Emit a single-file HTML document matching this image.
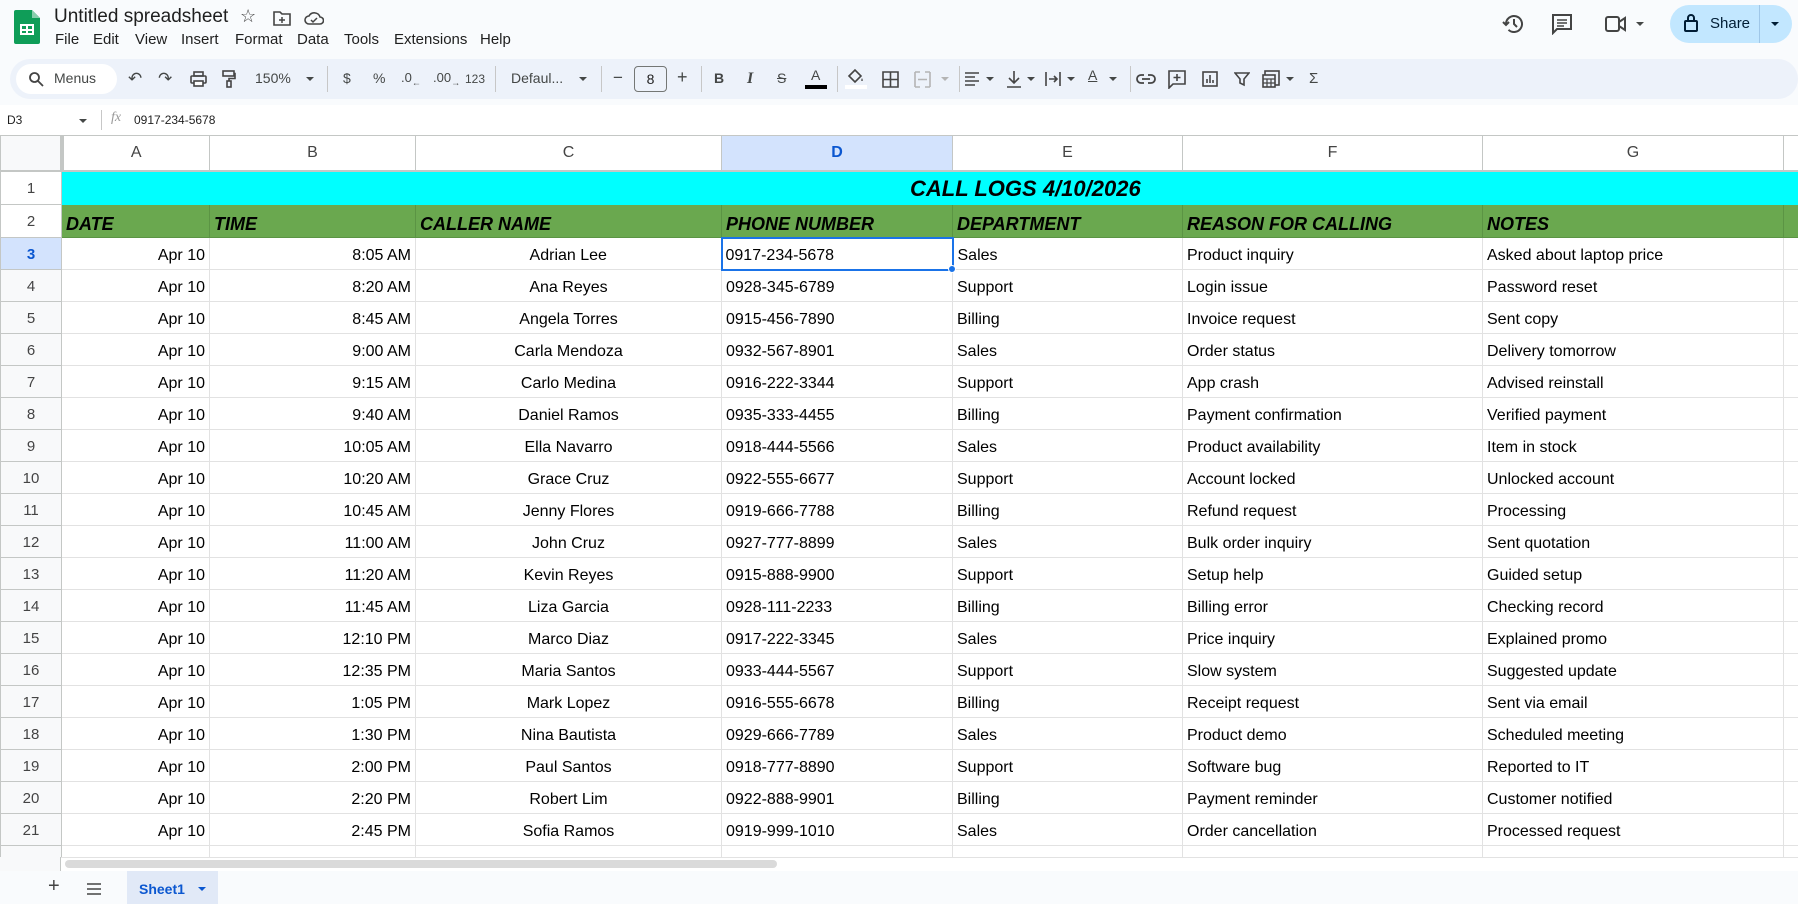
<!DOCTYPE html>
<html><head><meta charset="utf-8"><style>
*{box-sizing:border-box;margin:0;padding:0}
body{width:1798px;height:904px;overflow:hidden;background:#f9fbfd;font-family:"Liberation Sans",Arial,sans-serif;position:relative;color:#1f1f1f}
.a{position:absolute;white-space:nowrap}
.menu{top:31px;font-size:15px;color:#1f1f1f}
.tb{top:70px;font-size:14px;color:#444746}
.sep{position:absolute;top:66px;width:1px;height:26px;background:#c7c7c7}
.car{position:absolute;top:77px;width:0;height:0;border-left:4px solid transparent;border-right:4px solid transparent;border-top:4px solid #444746}
table{position:absolute;left:0;top:135px;width:1823px;border-collapse:collapse;table-layout:fixed;font-size:16px;background:#fff}
td{border:1px solid #e2e2e2;padding:5px 4px 0;overflow:hidden;white-space:nowrap;height:32px;color:#000;vertical-align:middle;line-height:20px}
td.rh{background:#f8f9fa;border-color:#c4c7c5;text-align:center;color:#444;font-size:15px;padding:2px 0 0}
tr.ch td{background:#fff;border-color:#c4c7c5;border-bottom:2px solid #c4c7c5;text-align:center;color:#444;font-size:16px;height:35px;padding:0}
tr.ch td.rh{background:#f8f9fa;border-right:4px solid #c4c7c5}
tr.t td{background:#00ffff;border-color:#00ffff;height:34px}
tr.t td.rh{background:#fff;border-color:#c4c7c5}
tr.g td{background:#6aa84f;border-color:#5b9444;font-weight:bold;font-style:italic;font-size:18px;height:33px;padding-top:6px}
tr.g td.rh{background:#fff;font-weight:normal;font-style:normal;font-size:15px;border-color:#c4c7c5;color:#444;padding-top:2px}
.r{text-align:right}.c{text-align:center}
</style></head><body>
<svg class="a" style="left:14px;top:10px" width="26" height="34" viewBox="0 0 26 34"><path d="M2 0h16l8 8v24a2 2 0 0 1-2 2H2a2 2 0 0 1-2-2V2a2 2 0 0 1 2-2z" fill="#0f9d58"/><path d="M18 0v8h8z" fill="#87ceac"/><rect x="6" y="14" width="14" height="11" fill="#fff"/><path d="M8 16h4v3H8zM14 16h4v3h-4zM8 21h4v2H8zM14 21h4v2h-4z" fill="#0f9d58"/></svg>
<div class="a" style="left:54px;top:6px;font-size:19px;color:#1f1f1f">Untitled spreadsheet</div>
<div class="a" style="left:240px;top:6px;font-size:18px;color:#444">☆</div>
<svg class="a" style="left:273px;top:10px" width="18" height="16" viewBox="0 0 18 16"><path d="M1 2h6l2 2h8v11H1z" fill="none" stroke="#444" stroke-width="1.6"/><path d="M9 7v6M6 10h6" stroke="#444" stroke-width="1.5"/></svg>
<svg class="a" style="left:304px;top:10px" width="20" height="16" viewBox="0 0 20 16"><path d="M5 14a4 4 0 0 1 0-8 6 6 0 0 1 11 1 3.5 3.5 0 0 1 0 7z" fill="none" stroke="#444" stroke-width="1.6"/><path d="M7 10l2 2 4-4" fill="none" stroke="#444" stroke-width="1.5"/></svg>
<div class="a menu" style="left:55px">File</div>
<div class="a menu" style="left:93px">Edit</div>
<div class="a menu" style="left:135px">View</div>
<div class="a menu" style="left:181px">Insert</div>
<div class="a menu" style="left:235px">Format</div>
<div class="a menu" style="left:297px">Data</div>
<div class="a menu" style="left:344px">Tools</div>
<div class="a menu" style="left:394px">Extensions</div>
<div class="a menu" style="left:480px">Help</div>
<svg class="a" style="left:1502px;top:12px" width="24" height="24" viewBox="0 0 24 24"><path d="M4 12a8 8 0 1 1 2.5 5.8" fill="none" stroke="#444" stroke-width="2"/><path d="M1 10l3 3 3-3" fill="none" stroke="#444" stroke-width="2"/><path d="M12 7v5l3 3" fill="none" stroke="#444" stroke-width="2"/></svg>
<svg class="a" style="left:1551px;top:13px" width="22" height="22" viewBox="0 0 22 22"><path d="M2 2h18v14H6l-4 4z" fill="none" stroke="#444" stroke-width="2"/><path d="M6 7h10M6 10h10M6 13h7" stroke="#444" stroke-width="1.6"/></svg>
<svg class="a" style="left:1605px;top:15px" width="22" height="18" viewBox="0 0 22 18"><rect x="1" y="2" width="13" height="14" rx="2" fill="none" stroke="#444" stroke-width="2"/><path d="M14 7l6-4v12l-6-4" fill="none" stroke="#444" stroke-width="2"/></svg>
<div class="car" style="left:1636px;top:22px"></div>
<div class="a" style="left:1670px;top:5px;width:122px;height:38px;border-radius:19px;background:#c2e7ff"></div>
<div class="a" style="left:1759px;top:5px;width:1px;height:38px;background:#9fc7e8"></div>
<svg class="a" style="left:1684px;top:14px" width="14" height="18" viewBox="0 0 14 18"><rect x="1" y="7" width="12" height="10" rx="1" fill="none" stroke="#001d35" stroke-width="2"/><path d="M4 7V4a3 3 0 0 1 6 0v3" fill="none" stroke="#001d35" stroke-width="2"/></svg>
<div class="a" style="left:1710px;top:15px;font-size:15px;color:#001d35">Share</div>
<div class="car" style="left:1771px;top:22px;border-top-color:#001d35"></div>
<div class="a" style="left:10px;top:59px;width:1788px;height:40px;border-radius:20px;background:#edf2fa"></div>
<div class="a" style="left:16px;top:64px;width:101px;height:30px;border-radius:15px;background:#fff"></div>
<svg class="a" style="left:28px;top:71px" width="16" height="16" viewBox="0 0 16 16"><circle cx="6.5" cy="6.5" r="4.5" fill="none" stroke="#444" stroke-width="1.8"/><path d="M10 10l5 5" stroke="#444" stroke-width="1.8"/></svg>
<div class="a tb" style="left:54px">Menus</div>
<div class="a tb" style="left:128px;font-size:17px;top:69px">↶</div>
<div class="a tb" style="left:158px;font-size:17px;top:69px">↷</div>
<svg class="a" style="left:190px;top:71px" width="17" height="16" viewBox="0 0 17 16"><rect x="4" y="1" width="9" height="4" fill="none" stroke="#444" stroke-width="1.6"/><rect x="1" y="5" width="15" height="7" rx="1" fill="none" stroke="#444" stroke-width="1.6"/><rect x="4" y="10" width="9" height="5" fill="#fff" stroke="#444" stroke-width="1.6"/></svg>
<svg class="a" style="left:222px;top:70px" width="14" height="18" viewBox="0 0 14 18"><rect x="1" y="1" width="11" height="5" fill="none" stroke="#444" stroke-width="1.6"/><path d="M12 3.5h1v5H7v3" fill="none" stroke="#444" stroke-width="1.6"/><rect x="5" y="11" width="4" height="6" fill="none" stroke="#444" stroke-width="1.6"/></svg>
<div class="a tb" style="left:255px">150%</div><div class="car" style="left:306px"></div>
<div class="sep" style="left:327px"></div>
<div class="a tb" style="left:343px">$</div>
<div class="a tb" style="left:373px">%</div>
<div class="a tb" style="left:401px;font-size:13px">.0<sub style="font-size:9px">←</sub></div>
<div class="a tb" style="left:433px;font-size:13px">.00<sub style="font-size:9px">→</sub></div>
<div class="a tb" style="left:465px;font-size:12px;top:72px">123</div>
<div class="sep" style="left:495px"></div>
<div class="a tb" style="left:511px">Defaul...</div><div class="car" style="left:579px"></div>
<div class="sep" style="left:601px"></div>
<div class="a tb" style="left:613px;font-size:17px;top:68px">−</div>
<div class="a" style="left:634px;top:66px;width:33px;height:26px;border:1px solid #747775;border-radius:4px;text-align:center;font-size:14px;line-height:24px;color:#1f1f1f">8</div>
<div class="a tb" style="left:677px;font-size:18px;top:67px">+</div>
<div class="sep" style="left:701px"></div>
<div class="a tb" style="left:714px;font-weight:bold">B</div>
<div class="a tb" style="left:747px;font-style:italic;font-weight:bold;font-family:'Liberation Serif',serif;font-size:16px">I</div>
<div class="a tb" style="left:777px;text-decoration:line-through">S</div>
<div class="a tb" style="left:811px;top:67px">A</div>
<div class="a" style="left:805px;top:85px;width:22px;height:4px;background:#000"></div>
<div class="sep" style="left:837px"></div>
<svg class="a" style="left:846px;top:68px" width="18" height="16" viewBox="0 0 18 16"><path d="M3 8l6-6 6 6-6 6z" fill="none" stroke="#444" stroke-width="1.6"/><path d="M16 10c1 2 1 3 0 3s-1-1 0-3z" fill="#444"/></svg>
<div class="a" style="left:845px;top:85px;width:22px;height:4px;background:#fff"></div>
<svg class="a" style="left:882px;top:71px" width="17" height="17" viewBox="0 0 17 17"><path d="M1 1h15v15H1zM8.5 1v15M1 8.5h15" fill="none" stroke="#444" stroke-width="1.6"/></svg>
<svg class="a" style="left:914px;top:71px" width="17" height="17" viewBox="0 0 17 17"><path d="M1 1h5M11 1h5M1 16h5M11 16h5M1 1v15M16 1v15M4 8.5h9" fill="none" stroke="#b4b4b4" stroke-width="1.6"/></svg>
<div class="car" style="left:941px;border-top-color:#b4b4b4"></div>
<div class="sep" style="left:959px"></div>
<svg class="a" style="left:964px;top:71px" width="16" height="16" viewBox="0 0 16 16"><path d="M1 2h14M1 6h10M1 10h14M1 14h10" stroke="#444" stroke-width="1.6"/></svg><div class="car" style="left:986px"></div>
<svg class="a" style="left:1006px;top:70px" width="16" height="18" viewBox="0 0 16 18"><path d="M8 1v11M3 8l5 5 5-5M1 17h14" fill="none" stroke="#444" stroke-width="1.6"/></svg><div class="car" style="left:1027px"></div>
<svg class="a" style="left:1045px;top:71px" width="16" height="16" viewBox="0 0 16 16"><path d="M1 1v14M15 1v14M4 8h8M9 5l3 3-3 3" fill="none" stroke="#444" stroke-width="1.6"/></svg><div class="car" style="left:1067px"></div>
<div class="a tb" style="left:1088px;top:67px;text-decoration:underline">A</div><div class="car" style="left:1109px"></div>
<div class="sep" style="left:1130px"></div>
<svg class="a" style="left:1136px;top:73px" width="20" height="12" viewBox="0 0 20 12"><path d="M8 2H5a4 4 0 0 0 0 8h3M12 2h3a4 4 0 0 1 0 8h-3M6 6h8" fill="none" stroke="#444" stroke-width="1.8"/></svg>
<svg class="a" style="left:1168px;top:70px" width="18" height="19" viewBox="0 0 18 19"><path d="M1 1h16v13H5l-4 4z" fill="none" stroke="#444" stroke-width="1.6"/><path d="M9 4v7M5.5 7.5h7" stroke="#444" stroke-width="1.6"/></svg>
<svg class="a" style="left:1202px;top:71px" width="16" height="16" viewBox="0 0 16 16"><rect x="1" y="1" width="14" height="14" fill="none" stroke="#444" stroke-width="1.6"/><path d="M5 12V8M8 12V4M11 12V9" stroke="#444" stroke-width="1.6"/></svg>
<svg class="a" style="left:1234px;top:71px" width="16" height="16" viewBox="0 0 16 16"><path d="M1 2h14l-5 6v6l-4-2V8z" fill="none" stroke="#444" stroke-width="1.6"/></svg>
<svg class="a" style="left:1262px;top:70px" width="18" height="18" viewBox="0 0 18 18"><rect x="3" y="1" width="14" height="14" fill="none" stroke="#444" stroke-width="1.6"/><rect x="1" y="5" width="12" height="12" fill="#edf2fa" stroke="#444" stroke-width="1.6"/><path d="M1 9h12M5 9v8M9 9v8M1 13h12" stroke="#444" stroke-width="1.2"/></svg><div class="car" style="left:1286px"></div>
<div class="a tb" style="left:1309px;font-size:15px">Σ</div>
<div class="a" style="left:0;top:105px;width:1798px;height:30px;background:#fff"></div>
<div class="a" style="left:7px;top:113px;font-size:12px;color:#1f1f1f">D3</div>
<div class="car" style="left:79px;top:119px"></div>
<div class="a" style="left:101px;top:110px;width:1px;height:20px;background:#c7c7c7"></div>
<div class="a" style="left:111px;top:110px;font-size:14px;font-style:italic;font-family:'Liberation Serif',serif;color:#999">fx</div>
<div class="a" style="left:134px;top:113px;font-size:12px;color:#1f1f1f">0917-234-5678</div>
<table>
<colgroup><col style="width:61px"><col style="width:148px"><col style="width:206px"><col style="width:306px"><col style="width:231px"><col style="width:230px"><col style="width:300px"><col style="width:301px"><col style="width:40px"></colgroup>
<tr class="ch"><td class="rh"></td><td>A</td><td>B</td><td>C</td><td style="background:#d3e3fd;color:#0b57d0;font-weight:bold">D</td><td>E</td><td>F</td><td>G</td><td></td></tr>
<tr class="t"><td class="rh">1</td><td colspan="8" style="position:relative"><span style="position:absolute;left:848px;top:5px;font-weight:bold;font-style:italic;font-size:22px;line-height:24px">CALL LOGS 4/10/2026</span></td></tr>
<tr class="g"><td class="rh">2</td><td>DATE</td><td>TIME</td><td>CALLER NAME</td><td>PHONE NUMBER</td><td>DEPARTMENT</td><td>REASON FOR CALLING</td><td>NOTES</td><td></td></tr>
<tr><td class="rh" style="background:#d3e3fd;color:#0b57d0;font-weight:bold">3</td><td class="r">Apr 10</td><td class="r">8:05 AM</td><td class="c">Adrian Lee</td><td style="border:2px solid #1a73e8;padding-left:3px">0917-234-5678</td><td>Sales</td><td>Product inquiry</td><td>Asked about laptop price</td><td></td></tr>
<tr><td class="rh">4</td><td class="r">Apr 10</td><td class="r">8:20 AM</td><td class="c">Ana Reyes</td><td>0928-345-6789</td><td>Support</td><td>Login issue</td><td>Password reset</td><td></td></tr>
<tr><td class="rh">5</td><td class="r">Apr 10</td><td class="r">8:45 AM</td><td class="c">Angela Torres</td><td>0915-456-7890</td><td>Billing</td><td>Invoice request</td><td>Sent copy</td><td></td></tr>
<tr><td class="rh">6</td><td class="r">Apr 10</td><td class="r">9:00 AM</td><td class="c">Carla Mendoza</td><td>0932-567-8901</td><td>Sales</td><td>Order status</td><td>Delivery tomorrow</td><td></td></tr>
<tr><td class="rh">7</td><td class="r">Apr 10</td><td class="r">9:15 AM</td><td class="c">Carlo Medina</td><td>0916-222-3344</td><td>Support</td><td>App crash</td><td>Advised reinstall</td><td></td></tr>
<tr><td class="rh">8</td><td class="r">Apr 10</td><td class="r">9:40 AM</td><td class="c">Daniel Ramos</td><td>0935-333-4455</td><td>Billing</td><td>Payment confirmation</td><td>Verified payment</td><td></td></tr>
<tr><td class="rh">9</td><td class="r">Apr 10</td><td class="r">10:05 AM</td><td class="c">Ella Navarro</td><td>0918-444-5566</td><td>Sales</td><td>Product availability</td><td>Item in stock</td><td></td></tr>
<tr><td class="rh">10</td><td class="r">Apr 10</td><td class="r">10:20 AM</td><td class="c">Grace Cruz</td><td>0922-555-6677</td><td>Support</td><td>Account locked</td><td>Unlocked account</td><td></td></tr>
<tr><td class="rh">11</td><td class="r">Apr 10</td><td class="r">10:45 AM</td><td class="c">Jenny Flores</td><td>0919-666-7788</td><td>Billing</td><td>Refund request</td><td>Processing</td><td></td></tr>
<tr><td class="rh">12</td><td class="r">Apr 10</td><td class="r">11:00 AM</td><td class="c">John Cruz</td><td>0927-777-8899</td><td>Sales</td><td>Bulk order inquiry</td><td>Sent quotation</td><td></td></tr>
<tr><td class="rh">13</td><td class="r">Apr 10</td><td class="r">11:20 AM</td><td class="c">Kevin Reyes</td><td>0915-888-9900</td><td>Support</td><td>Setup help</td><td>Guided setup</td><td></td></tr>
<tr><td class="rh">14</td><td class="r">Apr 10</td><td class="r">11:45 AM</td><td class="c">Liza Garcia</td><td>0928-111-2233</td><td>Billing</td><td>Billing error</td><td>Checking record</td><td></td></tr>
<tr><td class="rh">15</td><td class="r">Apr 10</td><td class="r">12:10 PM</td><td class="c">Marco Diaz</td><td>0917-222-3345</td><td>Sales</td><td>Price inquiry</td><td>Explained promo</td><td></td></tr>
<tr><td class="rh">16</td><td class="r">Apr 10</td><td class="r">12:35 PM</td><td class="c">Maria Santos</td><td>0933-444-5567</td><td>Support</td><td>Slow system</td><td>Suggested update</td><td></td></tr>
<tr><td class="rh">17</td><td class="r">Apr 10</td><td class="r">1:05 PM</td><td class="c">Mark Lopez</td><td>0916-555-6678</td><td>Billing</td><td>Receipt request</td><td>Sent via email</td><td></td></tr>
<tr><td class="rh">18</td><td class="r">Apr 10</td><td class="r">1:30 PM</td><td class="c">Nina Bautista</td><td>0929-666-7789</td><td>Sales</td><td>Product demo</td><td>Scheduled meeting</td><td></td></tr>
<tr><td class="rh">19</td><td class="r">Apr 10</td><td class="r">2:00 PM</td><td class="c">Paul Santos</td><td>0918-777-8890</td><td>Support</td><td>Software bug</td><td>Reported to IT</td><td></td></tr>
<tr><td class="rh">20</td><td class="r">Apr 10</td><td class="r">2:20 PM</td><td class="c">Robert Lim</td><td>0922-888-9901</td><td>Billing</td><td>Payment reminder</td><td>Customer notified</td><td></td></tr>
<tr><td class="rh">21</td><td class="r">Apr 10</td><td class="r">2:45 PM</td><td class="c">Sofia Ramos</td><td>0919-999-1010</td><td>Sales</td><td>Order cancellation</td><td>Processed request</td><td></td></tr>
<tr><td class="rh">22</td><td></td><td></td><td></td><td></td><td></td><td></td><td></td><td></td></tr>
</table>
<div class="a" style="left:948px;top:265px;width:8px;height:8px;border-radius:50%;background:#1a73e8;border:1px solid #fff"></div>
<div class="a" style="left:0;top:857px;width:1798px;height:14px;background:#fff;border-top:1px solid #e2e2e2"></div>
<div class="a" style="left:0;top:857px;width:61px;height:14px;background:#f8f9fa;border-right:1px solid #c4c7c5"></div>
<div class="a" style="left:65px;top:860px;width:712px;height:8px;border-radius:4px;background:#dadada"></div>
<div class="a" style="left:0;top:871px;width:1798px;height:33px;background:#f9fbfd"></div>
<div class="a" style="left:48px;top:875px;font-size:20px;color:#444">+</div>
<svg class="a" style="left:86px;top:883px" width="16" height="12" viewBox="0 0 16 12"><path d="M1 1h14M1 6h14M1 11h14" stroke="#444" stroke-width="1.6"/></svg>
<div class="a" style="left:127px;top:871px;width:91px;height:33px;background:#e1e9f7"></div>
<div class="a" style="left:139px;top:881px;font-size:14px;color:#0b57d0;font-weight:bold">Sheet1</div>
<div class="car" style="left:198px;top:887px;border-top-color:#0b57d0"></div>
</body></html>
